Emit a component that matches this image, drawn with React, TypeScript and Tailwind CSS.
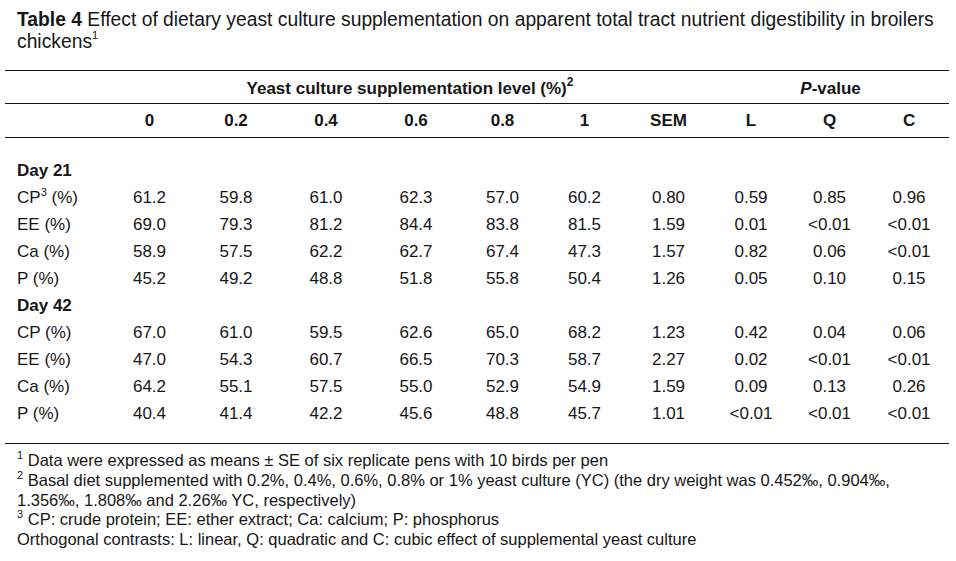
import React from "react";

type Row = { label: React.ReactNode; values: string[] };

const day21: Row[] = [
  {
    label: (
      <>
        CP<sup className="text-[11px] top-[-7px]">3</sup> (%)
      </>
    ),
    values: ["61.2", "59.8", "61.0", "62.3", "57.0", "60.2", "0.80", "0.59", "0.85", "0.96"],
  },
  { label: "EE (%)", values: ["69.0", "79.3", "81.2", "84.4", "83.8", "81.5", "1.59", "0.01", "<0.01", "<0.01"] },
  { label: "Ca (%)", values: ["58.9", "57.5", "62.2", "62.7", "67.4", "47.3", "1.57", "0.82", "0.06", "<0.01"] },
  { label: "P (%)", values: ["45.2", "49.2", "48.8", "51.8", "55.8", "50.4", "1.26", "0.05", "0.10", "0.15"] },
];

const day42: Row[] = [
  { label: "CP (%)", values: ["67.0", "61.0", "59.5", "62.6", "65.0", "68.2", "1.23", "0.42", "0.04", "0.06"] },
  { label: "EE (%)", values: ["47.0", "54.3", "60.7", "66.5", "70.3", "58.7", "2.27", "0.02", "<0.01", "<0.01"] },
  { label: "Ca (%)", values: ["64.2", "55.1", "57.5", "55.0", "52.9", "54.9", "1.59", "0.09", "0.13", "0.26"] },
  { label: "P (%)", values: ["40.4", "41.4", "42.2", "45.6", "48.8", "45.7", "1.01", "<0.01", "<0.01", "<0.01"] },
];

const heads = ["0", "0.2", "0.4", "0.6", "0.8", "1", "SEM", "L", "Q", "C"];

function DataRows({ title, rows }: { title: string; rows: Row[] }) {
  return (
    <>
      <tr className="h-[27px]">
        <td className="pl-[12px] font-bold">{title}</td>
        <td colSpan={10} />
      </tr>
      {rows.map((r, i) => (
        <tr key={i} className="h-[27px]">
          <td className="pl-[12px] whitespace-nowrap">{r.label}</td>
          {r.values.map((v, j) => (
            <td key={j} className="text-center">
              {v}
            </td>
          ))}
        </tr>
      ))}
    </>
  );
}

export default function App() {
  return (
    <div className="w-[956px] h-[561px] bg-white text-[#161616] font-['Liberation_Sans',Arial,sans-serif] overflow-hidden">
      <div className="pl-[17px] pt-[9px] text-[19.3px] leading-[22px] whitespace-nowrap">
        <div>
          <span className="font-bold">Table 4</span> Effect of dietary yeast culture supplementation on apparent total
          tract nutrient digestibility in broilers
        </div>
        <div>
          chickens<sup className="text-[11px] top-[-9px]">1</sup>
        </div>
      </div>

      <table className="ml-[5px] mt-[17px] w-[944px] table-fixed border-collapse text-[17px]">
        <colgroup>
          <col className="w-[103px]" />
          <col className="w-[83px]" />
          <col className="w-[90px]" />
          <col className="w-[90px]" />
          <col className="w-[90px]" />
          <col className="w-[83px]" />
          <col className="w-[81px]" />
          <col className="w-[87px]" />
          <col className="w-[78px]" />
          <col className="w-[79px]" />
          <col className="w-[80px]" />
        </colgroup>
        <thead>
          <tr className="h-[33px] border-t border-b border-[#111] font-bold">
            <th />
            <th colSpan={7} className="pt-[3px] text-center font-bold">
              Yeast culture supplementation level (%)<sup className="text-[12px] top-[-8px]">2</sup>
            </th>
            <th colSpan={3} className="pt-[3px] text-center font-bold">
              <i>P</i>-value
            </th>
          </tr>
          <tr className="h-[34px] border-b border-[#111]">
            <th />
            {heads.map((h) => (
              <th key={h} className="text-center font-bold">
                {h}
              </th>
            ))}
          </tr>
        </thead>
        <tbody>
          <tr className="h-[20px]">
            <td colSpan={11} />
          </tr>
          <DataRows title="Day 21" rows={day21} />
          <DataRows title="Day 42" rows={day42} />
          <tr className="h-[16px] border-b border-[#111]">
            <td colSpan={11} />
          </tr>
        </tbody>
      </table>

      <div className="pl-[17px] pt-[7px] text-[16.5px] leading-[19.75px] whitespace-nowrap">
        <div>
          <sup className="text-[11px] top-[-7px]">1</sup> Data were expressed as means ± SE of six replicate pens with 10
          birds per pen
        </div>
        <div>
          <sup className="text-[11px] top-[-7px]">2</sup> Basal diet supplemented with 0.2%, 0.4%, 0.6%, 0.8% or 1% yeast
          culture (YC) (the dry weight was 0.452‰, 0.904‰,
        </div>
        <div>1.356‰, 1.808‰ and 2.26‰ YC, respectively)</div>
        <div>
          <sup className="text-[11px] top-[-7px]">3</sup> CP: crude protein; EE: ether extract; Ca: calcium; P: phosphorus
        </div>
        <div>Orthogonal contrasts: L: linear, Q: quadratic and C: cubic effect of supplemental yeast culture</div>
      </div>
    </div>
  );
}
